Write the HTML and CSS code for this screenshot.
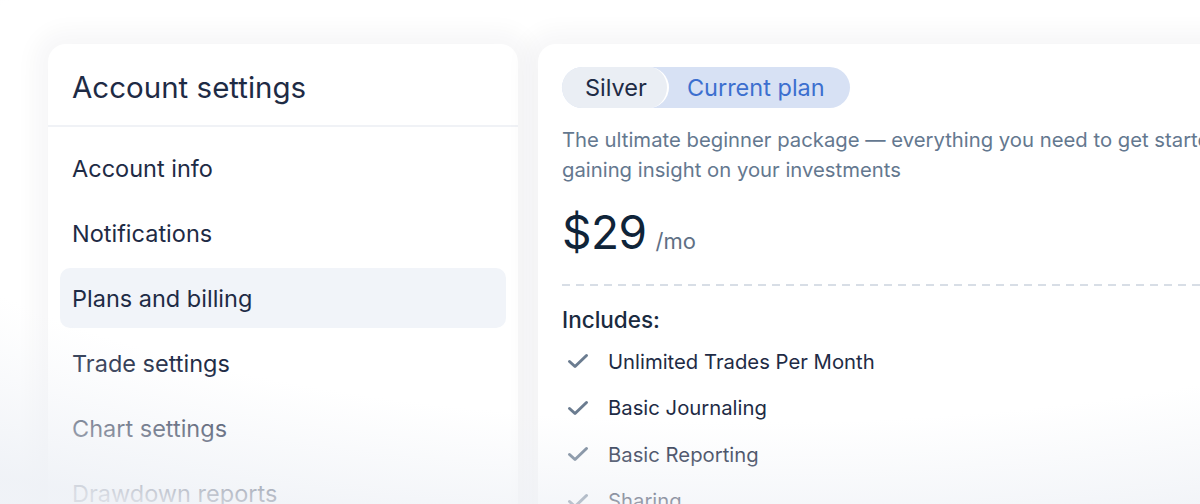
FILE: index.html
```html
<!DOCTYPE html>
<html lang="en">
<head>
<meta charset="utf-8">
<title>Account settings</title>
<link rel="stylesheet" href="styles.css">
</head>
<body>
<div class="stage">
  <aside class="card nav-card">
    <h1 class="nav-title">Account settings</h1>
    <nav class="nav-list">
      <a class="nav-item">Account info</a>
      <a class="nav-item">Notifications</a>
      <a class="nav-item active">Plans and billing</a>
      <a class="nav-item">Trade settings</a>
      <a class="nav-item">Chart settings</a>
      <a class="nav-item">Drawdown reports</a>
    </nav>
  </aside>
  <main class="card plan-card">
    <div class="plan-pill">
      <span class="plan-name">Silver</span>
      <span class="plan-current">Current plan</span>
    </div>
    <p class="plan-desc">The ultimate beginner package — everything you need to get started gaining insight on your investments</p>
    <div class="price"><span class="price-amount">$29</span><span class="price-unit">/mo</span></div>
    <div class="dashed"></div>
    <h2 class="includes">Includes:</h2>
    <ul class="features">
      <li class="feature"><svg class="check" viewBox="0 0 22 16"><path d="M2.5 8.5 L8 13.5 L19.5 2.5"/></svg><span>Unlimited Trades Per Month</span></li>
      <li class="feature"><svg class="check" viewBox="0 0 22 16"><path d="M2.5 8.5 L8 13.5 L19.5 2.5"/></svg><span>Basic Journaling</span></li>
      <li class="feature"><svg class="check" viewBox="0 0 22 16"><path d="M2.5 8.5 L8 13.5 L19.5 2.5"/></svg><span>Basic Reporting</span></li>
      <li class="feature"><svg class="check" viewBox="0 0 22 16"><path d="M2.5 8.5 L8 13.5 L19.5 2.5"/></svg><span>Sharing</span></li>
    </ul>
  </main>
</div>
<div class="fade"></div>
</body>
</html>
```
FILE: styles.css
```css
html, body {
  margin: 0;
  padding: 0;
  width: 1200px;
  height: 504px;
  overflow: hidden;
  background: #ffffff;
  font-family: Inter, "Noto Sans", sans-serif;
  color: #1e2b45;
}

.stage {
  display: flex;
  gap: 20px;
  padding: 44px 0 0 48px;
  width: 1400px;
  height: 460px;
  overflow: hidden;
}

.card {
  background: #ffffff;
  border-radius: 18px;
  box-shadow: 0 0 22px 14px rgba(30, 40, 60, 0.035);
  height: 560px;
}

.nav-card {
  width: 470px;
  flex: none;
}

.nav-title {
  margin: 0;
  height: 83px;
  box-sizing: border-box;
  display: flex;
  align-items: center;
  padding: 5px 24px 0;
  font-size: 29.5px;
  font-weight: 400;
  color: #1e2b45;
  border-bottom: 2px solid #f0f2f6;
}

.nav-list {
  display: flex;
  flex-direction: column;
  gap: 5px;
  padding: 11px 12px 0;
}

.nav-item {
  height: 60px;
  display: flex;
  align-items: center;
  padding: 0 12px;
  border-radius: 10px;
  font-size: 23.5px;
  font-weight: 400;
  color: #1e2b45;
}

.nav-item.active {
  background: #f1f4f9;
}

.plan-card {
  width: 720px;
  flex: none;
  padding: 23px 24px 0;
  box-sizing: border-box;
}

.plan-pill {
  display: inline-flex;
  align-items: center;
  height: 41px;
  background: #d7e1f4;
  border-radius: 21px;
}

.plan-name {
  height: 41px;
  box-sizing: border-box;
  display: flex;
  align-items: center;
  padding: 0 20px 0 23px;
  background: #eaeef4;
  border-right: 2px solid #ffffff;
  border-radius: 21px;
  font-size: 23.5px;
  color: #1e2b45;
}

.plan-current {
  padding: 0 25px 0 18px;
  font-size: 23.5px;
  color: #3c6fcf;
}

.plan-desc {
  margin: 17px 0 0;
  width: 700px;
  font-size: 20.3px;
  line-height: 30px;
  color: #64788f;
}

.price {
  display: flex;
  align-items: baseline;
  margin-top: 19px;
  height: 56px;
}

.price-amount {
  font-size: 46px;
  color: #0f2439;
  letter-spacing: -0.5px;
}

.price-unit {
  margin-left: 9px;
  font-size: 22px;
  color: #5f7085;
}

.dashed {
  margin-top: 24px;
  height: 2px;
  background: repeating-linear-gradient(90deg, #d8dee6 0 8px, transparent 8px 14px);
}

.includes {
  margin: 19px 0 0;
  font-size: 22.5px;
  font-weight: 500;
  line-height: 30px;
  color: #1a2b40;
}

.features {
  list-style: none;
  margin: 3px 0 0;
  padding: 0;
  display: flex;
  flex-direction: column;
}

.feature {
  height: 46.5px;
  display: flex;
  align-items: center;
  font-size: 20.3px;
  color: #1e2b45;
}

.check {
  width: 22px;
  height: 16px;
  margin: 0 19px 0 5px;
  flex: none;
}

.check path {
  fill: none;
  stroke: #6b7c90;
  stroke-width: 3;
  stroke-linecap: round;
  stroke-linejoin: round;
}

.fade {
  position: absolute;
  left: 0;
  top: 0;
  width: 1200px;
  height: 504px;
  pointer-events: none;
  background: radial-gradient(1300px 400px at 750px 150px, rgba(238, 241, 246, 0) 68%, rgba(238, 241, 246, 0.9) 100%);
}
```
